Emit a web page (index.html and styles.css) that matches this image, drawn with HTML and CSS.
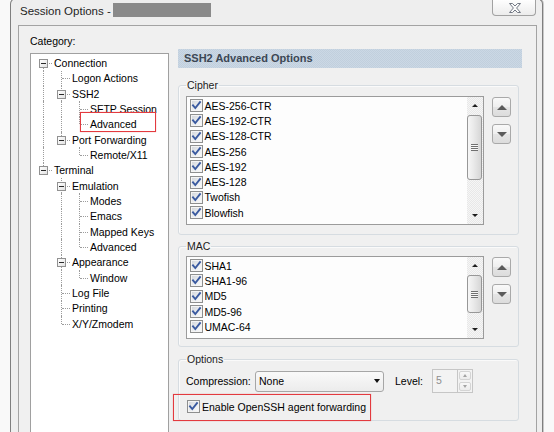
FILE: index.html
```html
<!DOCTYPE html>
<html>
<head>
<meta charset="utf-8">
<title>Session Options</title>
<link rel="stylesheet" href="styles.css">
</head>
<body>
<svg class="defs" width="0" height="0" aria-hidden="true">
  <defs>
    <symbol id="chk" viewBox="0 0 11 11">
      <path d="M2 5.3 L4.3 8 L9 2.2" fill="none" stroke="#3a5aa0" stroke-width="1.9" stroke-linecap="square" stroke-linejoin="miter"/>
    </symbol>
  </defs>
</svg>

<div class="window">
  <div class="titlebar">
    <div class="title"><span class="title-text">Session Options -</span><span class="redact"></span></div>
    <div class="close">
      <svg width="12" height="10" viewBox="0 0 12 10"><path d="M0.5 0.5 H3.5 L6 3 L8.5 0.5 H11.5 L7.6 5 L11.5 9.5 H8.5 L6 7 L3.5 9.5 H0.5 L4.4 5 Z" fill="#fbfbfb" stroke="#737985" stroke-width="1"/></svg>
    </div>
  </div>

  <div class="client">
    <div class="left">
      <div class="cat-label">Category:</div>
      <div class="tree">
        <div class="row"><span class="g first"><i class="exp"></i></span><span class="t">Connection</span></div>
        <div class="row"><span class="g v"></span><span class="g tee"></span><span class="t">Logon Actions</span></div>
        <div class="row"><span class="g v"></span><span class="g tee"><i class="exp"></i></span><span class="t">SSH2</span></div>
        <div class="row"><span class="g v"></span><span class="g v"></span><span class="g tee"></span><span class="t">SFTP Session</span></div>
        <div class="row"><span class="g v"></span><span class="g v"></span><span class="g ell"></span><span class="t">Advanced</span></div>
        <div class="row"><span class="g v"></span><span class="g ell"><i class="exp"></i></span><span class="t">Port Forwarding</span></div>
        <div class="row"><span class="g v"></span><span class="g"></span><span class="g ell"></span><span class="t">Remote/X11</span></div>
        <div class="row"><span class="g ell"><i class="exp"></i></span><span class="t">Terminal</span></div>
        <div class="row"><span class="g"></span><span class="g tee"><i class="exp"></i></span><span class="t">Emulation</span></div>
        <div class="row"><span class="g"></span><span class="g v"></span><span class="g tee"></span><span class="t">Modes</span></div>
        <div class="row"><span class="g"></span><span class="g v"></span><span class="g tee"></span><span class="t">Emacs</span></div>
        <div class="row"><span class="g"></span><span class="g v"></span><span class="g tee"></span><span class="t">Mapped Keys</span></div>
        <div class="row"><span class="g"></span><span class="g v"></span><span class="g ell"></span><span class="t">Advanced</span></div>
        <div class="row"><span class="g"></span><span class="g tee"><i class="exp"></i></span><span class="t">Appearance</span></div>
        <div class="row"><span class="g"></span><span class="g v"></span><span class="g ell"></span><span class="t">Window</span></div>
        <div class="row"><span class="g"></span><span class="g tee"></span><span class="t">Log File</span></div>
        <div class="row"><span class="g"></span><span class="g tee"></span><span class="t">Printing</span></div>
        <div class="row"><span class="g"></span><span class="g ell"></span><span class="t">X/Y/Zmodem</span></div>
      </div>
    </div>

    <div class="right">
      <div class="page-head">SSH2 Advanced Options</div>

      <fieldset class="group g-cipher">
        <legend>Cipher</legend>
        <div class="grow">
          <div class="listbox lb-cipher">
            <ul class="items">
              <li><span class="cb"><svg><use href="#chk"/></svg></span><span class="it">AES-256-CTR</span></li>
              <li><span class="cb"><svg><use href="#chk"/></svg></span><span class="it">AES-192-CTR</span></li>
              <li><span class="cb"><svg><use href="#chk"/></svg></span><span class="it">AES-128-CTR</span></li>
              <li><span class="cb"><svg><use href="#chk"/></svg></span><span class="it">AES-256</span></li>
              <li><span class="cb"><svg><use href="#chk"/></svg></span><span class="it">AES-192</span></li>
              <li><span class="cb"><svg><use href="#chk"/></svg></span><span class="it">AES-128</span></li>
              <li><span class="cb"><svg><use href="#chk"/></svg></span><span class="it">Twofish</span></li>
              <li><span class="cb"><svg><use href="#chk"/></svg></span><span class="it">Blowfish</span></li>
            </ul>
            <div class="sb">
              <div class="arr up"></div>
              <div class="thumb th-cipher"><span class="grip"></span></div>
              <div class="track"></div>
              <div class="arr down"></div>
            </div>
          </div>
          <div class="movers">
            <div class="mv up"></div>
            <div class="mv down"></div>
          </div>
        </div>
      </fieldset>

      <fieldset class="group g-mac">
        <legend>MAC</legend>
        <div class="grow">
          <div class="listbox lb-mac">
            <ul class="items">
              <li><span class="cb"><svg><use href="#chk"/></svg></span><span class="it">SHA1</span></li>
              <li><span class="cb"><svg><use href="#chk"/></svg></span><span class="it">SHA1-96</span></li>
              <li><span class="cb"><svg><use href="#chk"/></svg></span><span class="it">MD5</span></li>
              <li><span class="cb"><svg><use href="#chk"/></svg></span><span class="it">MD5-96</span></li>
              <li><span class="cb"><svg><use href="#chk"/></svg></span><span class="it">UMAC-64</span></li>
            </ul>
            <div class="sb">
              <div class="arr up"></div>
              <div class="thumb th-mac"><span class="grip"></span></div>
              <div class="track"></div>
              <div class="arr down"></div>
            </div>
          </div>
          <div class="movers">
            <div class="mv up"></div>
            <div class="mv down"></div>
          </div>
        </div>
      </fieldset>

      <fieldset class="group g-options">
        <legend>Options</legend>
        <div class="opt-row">
          <span class="comp-label">Compression:</span>
          <div class="select"><span>None</span><span class="caret"></span></div>
          <span class="lvl-label">Level:</span>
          <div class="spin">
            <div class="edit">5</div>
            <div class="spin-btns"><div class="sp up"></div><div class="sp down"></div></div>
          </div>
        </div>
        <div class="agent">
          <span class="cb"><svg><use href="#chk"/></svg></span><span class="agent-text">Enable OpenSSH agent forwarding</span>
        </div>
      </fieldset>
    </div>
  </div>
</div>

<div class="mark mark-tree"></div>
<div class="mark mark-agent"></div>
</body>
</html>
```

FILE: styles.css
```css
html, body {
  margin: 0;
  padding: 0;
}

body {
  width: 554px;
  height: 432px;
  overflow: hidden;
  position: relative;
  background: #f9f9f9;
  font-family: "Liberation Sans", Arial, sans-serif;
  font-size: 10.5px;
  color: #000;
}

.defs {
  position: absolute;
  width: 0;
  height: 0;
  overflow: hidden;
}

/* ---------- window frame ---------- */
.window {
  margin-left: 10px;
  margin-top: -2px;
  width: 533px;
  height: 434px;
  box-sizing: border-box;
  border: 1px solid #7f7f7f;
  border-bottom: none;
  border-radius: 6px 6px 0 0;
  background: #eeeeee;
  padding: 0 5px 0 7px;
  box-shadow: 1px 0 0 #c9c9c9;
  display: flex;
  flex-direction: column;
}

.titlebar {
  height: 26px;
  flex: none;
  display: flex;
  align-items: flex-start;
}

.title {
  display: flex;
  align-items: flex-start;
  margin-left: 2px;
  padding-top: 5px;
}

.title-text {
  font-size: 11.5px;
  line-height: 14px;
  color: #1e1e1e;
  white-space: nowrap;
}

.redact {
  display: block;
  width: 98px;
  height: 14px;
  margin-left: 2px;
  margin-top: -1px;
  background: #8a8a8a;
}

.close {
  margin-left: auto;
  margin-right: 1px;
  margin-top: 1px;
  width: 44px;
  height: 16px;
  box-sizing: border-box;
  border: 1px solid #a2a2a2;
  border-top: none;
  border-radius: 0 0 4px 4px;
  background: linear-gradient(#fefefe, #ececec);
  display: flex;
  align-items: center;
  justify-content: center;
}

.close svg {
  display: block;
  margin-left: 1px;
}

/* ---------- client area ---------- */
.client {
  flex: 1;
  min-height: 0;
  overflow: hidden;
  box-sizing: border-box;
  border: 1px solid #a3a3a3;
  border-bottom: none;
  background: #f0f0f0;
  display: flex;
  align-items: flex-start;
  gap: 9px;
  padding: 8px 14px 0 11px;
}

.left {
  width: 139px;
  flex: none;
  align-self: stretch;
  display: flex;
  flex-direction: column;
}

.cat-label {
  line-height: 13px;
  margin-top: 1px;
}

.tree {
  flex: 1;
  margin-top: 5px;
  box-sizing: border-box;
  border: 1px solid #a0a0a0;
  border-bottom: none;
  background: #ffffff;
  padding: 1.3px 0 0 3px;
}

.row {
  height: 15.35px;
  display: flex;
  align-items: center;
}

.g {
  position: relative;
  width: 18px;
  height: 100%;
  flex: none;
}

.g.v::before,
.g.tee::before,
.g.ell::before,
.g.first::before {
  content: "";
  position: absolute;
  left: 9px;
  border-left: 1px dotted #9c9c9c;
}

.g.v::before,
.g.tee::before {
  top: 0;
  bottom: 0;
}

.g.ell::before {
  top: 0;
  height: 50%;
}

.g.first::before {
  top: 50%;
  bottom: 0;
}

.g.tee::after,
.g.ell::after,
.g.first::after {
  content: "";
  position: absolute;
  left: 10px;
  right: 0;
  top: 50%;
  border-top: 1px dotted #9c9c9c;
}

.exp {
  position: absolute;
  z-index: 1;
  left: 5px;
  top: calc(50% - 4px);
  width: 7px;
  height: 7px;
  border: 1px solid #919191;
  background: linear-gradient(135deg, #ffffff, #e2e2e2);
}

.exp::before {
  content: "";
  position: absolute;
  left: 1px;
  top: 3px;
  width: 5px;
  height: 1px;
  background: #2a2a2a;
}

.t {
  margin-left: 2px;
  line-height: 14px;
  white-space: nowrap;
}

/* ---------- right page ---------- */
.right {
  width: 344px;
  flex: none;
  margin-top: 15px;
}

.page-head {
  height: 19px;
  line-height: 19px;
  padding-left: 6px;
  font-size: 11px;
  font-weight: bold;
  color: #3c4754;
  background-color: #c6d3e0;
  background-image: repeating-conic-gradient(#c1cfdd 0 25%, #cbd8e5 0 50%);
  background-size: 2px 2px;
}

.group {
  margin: 11px 3px 0 0;
  min-width: 0;
  border: 1px solid #d6dce1;
  border-radius: 3px;
  padding: 5px 6px 9px 7px;
  box-shadow: inset 1px 1px 0 #fafafa;
}

.group legend {
  padding: 0 1px;
  line-height: 12px;
  color: #1c1c1c;
}

.g-mac {
  margin-top: 5px;
  padding-top: 4px;
  padding-bottom: 7px;
}

.g-options {
  margin-top: 6px;
  padding-top: 4px;
  padding-bottom: 7px;
}

.grow {
  display: flex;
  align-items: flex-start;
  gap: 8px;
}

.listbox {
  width: 298px;
  box-sizing: border-box;
  border: 1px solid #9b9b9b;
  background: #fdfdfd;
  display: flex;
}

.lb-cipher { height: 129px; }
.lb-mac { height: 83px; }

.items {
  flex: 1;
  list-style: none;
  margin: 0;
  padding: 1px 0 0 3px;
}

.items li {
  height: 15.3px;
  display: flex;
  align-items: center;
}

.cb {
  position: relative;
  flex: none;
  width: 13px;
  height: 13px;
  box-sizing: border-box;
  border: 1px solid #8e8f8f;
  background: linear-gradient(135deg, #cfd3d9, #eef0f2 60%, #fafafa);
  box-shadow: inset 0 0 0 1px #f4f4f4;
}

.cb svg {
  position: absolute;
  left: 0;
  top: 0;
  width: 11px;
  height: 11px;
}

.it {
  margin-left: 1.5px;
  line-height: 14px;
  white-space: nowrap;
}

/* scrollbar */
.sb {
  width: 16px;
  flex: none;
  display: flex;
  flex-direction: column;
  background-color: #efefef;
  background-image: repeating-conic-gradient(#e8e8e8 0 25%, #f6f6f6 0 50%);
  background-size: 2px 2px;
}

.sb .arr {
  height: 17px;
  flex: none;
  display: flex;
  align-items: center;
  justify-content: center;
}

.sb .arr::before {
  content: "";
  border-left: 3px solid transparent;
  border-right: 3px solid transparent;
}

.sb .arr.up::before { border-bottom: 3px solid #1e1e1e; }
.sb .arr.down::before { border-top: 3px solid #1e1e1e; }

.sb .track { flex: 1; }

.thumb {
  flex: none;
  margin: 1px 1px 0 0;
  box-sizing: border-box;
  border: 1px solid #979797;
  border-radius: 3px;
  background: linear-gradient(90deg, #f6f6f6, #e9e9e9 45%, #d6d6d6);
  display: flex;
  align-items: center;
  justify-content: center;
}

.th-cipher { height: 65px; }
.th-mac { height: 38px; }

.grip {
  width: 7px;
  height: 7px;
  background: repeating-linear-gradient(#707070 0 1px, #f7f7f7 1px 2px);
}

/* move up / down buttons */
.movers {
  display: flex;
  flex-direction: column;
  gap: 7px;
  margin-top: 1px;
}

.mv {
  width: 19px;
  height: 20px;
  box-sizing: border-box;
  border: 1px solid #a9a9a9;
  border-radius: 3px;
  background: linear-gradient(#f9f9f9, #efefef 50%, #e5e5e5 50%, #dcdcdc);
  display: flex;
  align-items: center;
  justify-content: center;
}

.mv::before {
  content: "";
  border-left: 5px solid transparent;
  border-right: 5px solid transparent;
}

.mv.up::before { border-bottom: 5px solid #5b5b5b; }
.mv.down::before { border-top: 5px solid #5b5b5b; }

/* options */
.opt-row {
  display: flex;
  align-items: center;
  height: 24px;
}

.comp-label {
  width: 69px;
  flex: none;
  white-space: nowrap;
}

.select {
  width: 129px;
  height: 21px;
  box-sizing: border-box;
  border: 1px solid #a6a6a6;
  border-radius: 3px;
  background: linear-gradient(#f9f9f9, #ececec);
  display: flex;
  align-items: center;
  padding-left: 3px;
}

.caret {
  margin-left: auto;
  margin-right: 3px;
  border-left: 3.5px solid transparent;
  border-right: 3.5px solid transparent;
  border-top: 4px solid #111;
}

.lvl-label {
  margin-left: 11px;
  width: 37px;
  flex: none;
}

.spin {
  display: flex;
  height: 24px;
}

.spin .edit {
  width: 25px;
  box-sizing: border-box;
  border: 1px solid #c6c6c6;
  border-right: none;
  background: #f3f3f3;
  color: #8e8e8e;
  padding-left: 3px;
  line-height: 20px;
}

.spin-btns {
  width: 16px;
  display: flex;
  flex-direction: column;
  border: 1px solid #c6c6c6;
  box-sizing: border-box;
  background: #f3f3f3;
}

.sp {
  flex: 1;
  margin: 1px;
  border: 1px solid #d4d4d4;
  border-radius: 2px;
  background: linear-gradient(#f8f8f8, #ececec);
  display: flex;
  align-items: center;
  justify-content: center;
}

.sp::before {
  content: "";
  border-left: 2.5px solid transparent;
  border-right: 2.5px solid transparent;
}

.sp.up::before { border-bottom: 3px solid #a4a4a4; }
.sp.down::before { border-top: 3px solid #a4a4a4; }

.agent {
  display: flex;
  align-items: center;
  height: 13px;
  margin-top: 7px;
  margin-left: 1px;
}

.agent-text {
  margin-left: 2px;
  line-height: 14px;
  white-space: nowrap;
}

/* annotation boxes */
.mark {
  position: absolute;
  box-sizing: border-box;
  border: 1px solid #e33a3f;
  box-shadow: 0 0 1px rgba(230, 60, 60, 0.5);
}

.mark-tree {
  left: 80px;
  top: 112px;
  width: 76px;
  height: 20px;
}

.mark-agent {
  left: 173px;
  top: 394px;
  width: 198px;
  height: 27px;
}
```
